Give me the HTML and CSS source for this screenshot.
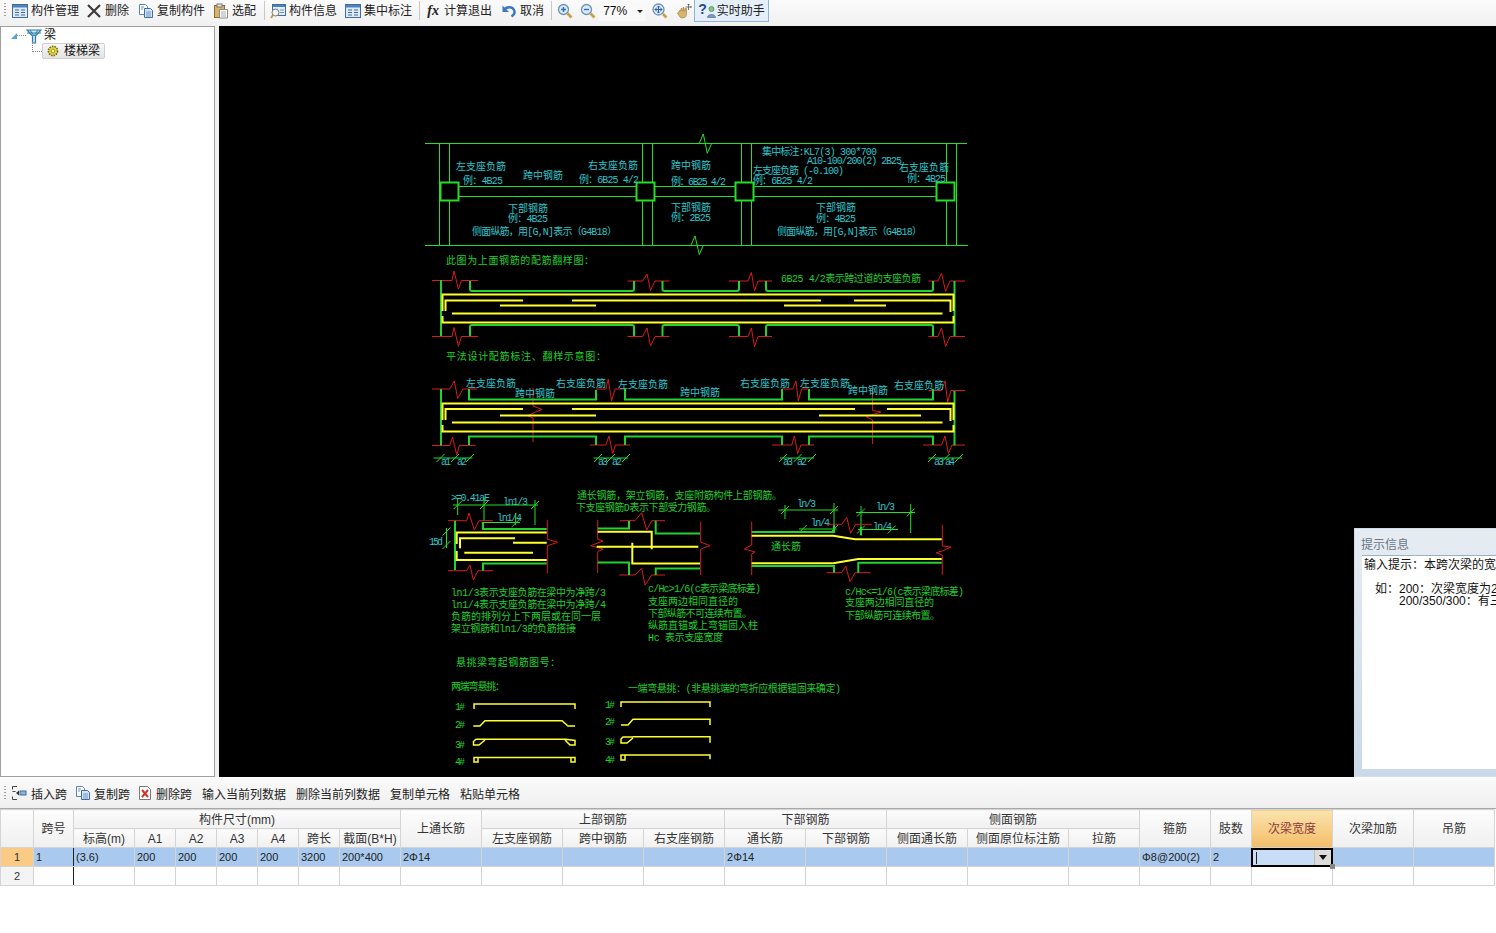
FILE: index.html
```html
<!DOCTYPE html>
<html lang="zh">
<head>
<meta charset="utf-8">
<title>楼梯梁</title>
<link rel="stylesheet" href="styles.css">
</head>
<body>
<div class="app">
  <header class="toolbar">
    <span class="grip"></span>
    <button class="tool"><svg class="ico" viewBox="0 0 16 16"><rect x=".5" y="1.5" width="15" height="13" fill="#dfeaf6" stroke="#3f6da3"/><rect x="1" y="2" width="14" height="2.5" fill="#4f81bd"/><path d="M3 7h4M3 9.5h4M3 12h4M9 7h4M9 9.5h4M9 12h4" stroke="#3f6da3"/></svg>构件管理</button>
    <button class="tool"><svg class="ico" viewBox="0 0 16 16"><path d="M2 2l12 12M14 2L2 14" stroke="#3c3c3c" stroke-width="2.2" fill="none"/></svg>删除</button>
    <button class="tool ml2"><svg class="ico" viewBox="0 0 16 16"><path d="M1.5 1.5h6l2 2v8h-8z" fill="#fff" stroke="#5b85b8"/><path d="M6.5 5.500h6l2 2v7h-8z" fill="#d6e4f5" stroke="#3f6da3"/><path d="M3 4h3M3 6h2M8 9h5M8 11h5M8 13h5" stroke="#6f94c2"/></svg>复制构件</button>
    <button class="tool ml1"><svg class="ico" viewBox="0 0 16 16"><rect x="1.5" y="2.500" width="10" height="12" fill="#d9b36a" stroke="#8a6a2e"/><rect x="4" y="1" width="5" height="3" fill="#e8e8e8" stroke="#777"/><path d="M6.500 6.500h8v8.500h-8z" fill="#fff" stroke="#8a8a8a"/><path d="M8 9h5M8 11h5M8 13h5" stroke="#aaa"/></svg>选配</button>
    <span class="sep sep-a"></span>
    <button class="tool"><svg class="ico" viewBox="0 0 16 16"><rect x="2.500" y="1.500" width="13" height="11" fill="#e3edf8" stroke="#3f6da3"/><rect x="3" y="2" width="12" height="2" fill="#4f81bd"/><path d="M10 7h4M10 9.500h4" stroke="#6f94c2"/><circle cx="5.500" cy="9.500" r="3.500" fill="#f4f4f4" stroke="#777"/><path d="M3 12l-2 3" stroke="#c49a3c" stroke-width="2"/></svg>构件信息</button>
    <button class="tool ml1"><svg class="ico" viewBox="0 0 16 16"><rect x=".5" y="1.500" width="15" height="13" fill="#dfeaf6" stroke="#3f6da3"/><rect x="1" y="2" width="14" height="2.500" fill="#4f81bd"/><path d="M3 7h4M3 9.500h4M3 12h4M9 7h4M9 9.500h4M9 12h4" stroke="#3f6da3"/></svg>集中标注</button>
    <span class="sep sep-b"></span>
    <button class="tool tool-fx"><span class="fx">fx</span>计算退出</button>
    <button class="tool ml2"><svg class="ico" viewBox="0 0 16 16"><path d="M3 7.500C5 3.500 11 3 13 7c1.200 2.500 0 5-2.500 6.500" stroke="#3d78c4" stroke-width="2.400" fill="none"/><path d="M1.500 2.500v6.500h6.500z" fill="#3d78c4"/></svg>取消</button>
    <span class="sep sep-c"></span>
    <button class="tool tool-icon"><svg class="ico" viewBox="0 0 16 16"><circle cx="6.500" cy="6.500" r="5" fill="#dbe9f8" stroke="#6d92b8" stroke-width="1.300"/><path d="M4 6.500h5M6.500 4v5" stroke="#2f6fb5" stroke-width="1.400"/><path d="M10.500 10.500l4 4" stroke="#c9a23f" stroke-width="2.600"/></svg></button>
    <button class="tool tool-icon ml1"><svg class="ico" viewBox="0 0 16 16"><circle cx="6.500" cy="6.500" r="5" fill="#dbe9f8" stroke="#6d92b8" stroke-width="1.300"/><path d="M4 6.500h5" stroke="#2f6fb5" stroke-width="1.400"/><path d="M10.500 10.500l4 4" stroke="#c9a23f" stroke-width="2.600"/></svg></button>
    <span class="zoom-box">77%<i class="drop"></i></span>
    <button class="tool tool-icon ml4"><svg class="ico" viewBox="0 0 16 16"><circle cx="6.500" cy="6.500" r="5.500" fill="#dbe9f8" stroke="#6d92b8" stroke-width="1.300"/><path d="M3 6.500h7M6.500 3v7M3 6.500l1.500-1.500M3 6.500L4.500 8M10 6.500L8.500 5M10 6.500L8.500 8M6.500 3L5 4.500M6.500 3L8 4.500M6.500 10L5 8.500M6.500 10L8 8.500" stroke="#2f5f9e" fill="none"/><path d="M11 11l3.500 3.500" stroke="#c9a23f" stroke-width="2.600"/></svg></button>
    <button class="tool tool-icon ml2"><svg class="ico" viewBox="0 0 16 16"><path d="M2 10l2-3 1 1V5.500h1V8h1V4.500h1V8h1V5.500h1.500V10c0 3-1 5-4 5-2.500 0-3-1.500-5-5z" fill="#d9b46c" stroke="#a5833d" stroke-width=".7"/><path d="M12.500 1v6M9.500 4h6M12.500 1l-1 1M12.500 1l1 1M15.500 4l-1-1M15.500 4l-1 1" stroke="#555" stroke-width=".8" fill="none"/></svg></button>
    <button class="tool tool-on"><span class="qmark">?</span><svg class="ico-small" viewBox="0 0 9 12"><circle cx="4.500" cy="3" r="2.500" fill="#8cc08c" stroke="#4b7d4b" stroke-width=".7"/><path d="M.5 11.500c0-4 8-4 8 0z" fill="#7a9fc0" stroke="#4d6f8f" stroke-width=".7"/></svg>实时助手</button>
  </header>

  <main class="main">
    <aside class="tree">
      <div class="node node-root">
        <svg class="caret" viewBox="0 0 6 6"><path d="M6 0v6H0z" fill="#4aa8d8"/></svg>
        <span class="dots-h"></span>
        <svg class="ico" viewBox="0 0 16 16"><path d="M1 2h14L9.500 8v7h-3V8z" fill="#cfe7f4" stroke="#2d7fa8" stroke-width="1.200"/><path d="M4 2l4 6 4-6M1 5h14" stroke="#2d7fa8" fill="none"/></svg>
        <span class="node-label">梁</span>
      </div>
      <div class="node node-child">
        <span class="dots-l"></span>
        <div class="selected">
          <svg class="ico-gear" viewBox="0 0 12 12"><circle cx="6" cy="6" r="4.600" fill="#e5d43a" stroke="#6f6a14" stroke-dasharray="1.500 1" stroke-width="1.600"/><circle cx="6" cy="6" r="1.800" fill="#fff8a0" stroke="#6f6a14" stroke-width=".6"/></svg>
          <span class="selected-label">楼梯梁</span>
        </div>
      </div>
    </aside>
    <div class="gutter"></div>
    <section class="canvas">
      <svg class="drawing" viewBox="219 26 1277 751" width="1277" height="751">
        <!-- section 1 -->
        <g class="ln-green">
          <path d="M425 143.500H967M425 245.500H968M439.500 143V245M449.500 143V245M642.500 143V245M652.500 143V245M741.500 143V245M751.500 143V245M946.500 143V245M956.500 143V245"/>
          <path d="M459 186.500H936M459 196.500H936"/>
          <path d="M699.300 143.300L703.300 134L707.300 153.300L711.700 143.300M691 245L695 236L699.300 254.700L703.300 245"/>
        </g>
        <g class="ln-green-b">
          <rect x="440.500" y="182.500" width="18" height="18"/><rect x="636.500" y="182.500" width="18" height="18"/><rect x="735.500" y="182.500" width="18" height="18"/><rect x="936.500" y="182.500" width="18" height="18"/>
        </g>
        <g class="cy">
          <text x="456" y="170" textLength="50">左支座负筋</text>
          <text x="463" y="184" textLength="40">例：4B25</text>
          <text x="523" y="179" textLength="40">跨中钢筋</text>
          <text x="588" y="169" textLength="50">右支座负筋</text>
          <text x="579" y="183" textLength="60">例：6B25 4/2</text>
          <text x="508" y="212" textLength="40">下部钢筋</text>
          <text x="508" y="222" textLength="40">例：4B25</text>
          <text x="472" y="235" textLength="145">侧面纵筋，用[G,N]表示（G4B18）</text>
          <text x="671" y="169" textLength="40">跨中钢筋</text>
          <text x="671" y="185" textLength="55">例：6B25 4/2</text>
          <text x="671" y="211" textLength="40">下部钢筋</text>
          <text x="671" y="221" textLength="40">例：2B25</text>
          <text x="762" y="155" textLength="115">集中标注:KL7(3) 300*700</text>
          <text x="807" y="164" textLength="95">A10-100/200(2) 2B25</text>
          <text x="753" y="174" textLength="91">左支座负筋 (-0.100)</text>
          <text x="753" y="184" textLength="60">例：6B25 4/2</text>
          <text x="899" y="171" textLength="50">右支座负筋</text>
          <text x="907" y="182" textLength="39">例：4B25</text>
          <text x="816" y="211" textLength="40">下部钢筋</text>
          <text x="816" y="222" textLength="40">例：4B25</text>
          <text x="777" y="235" textLength="145">侧面纵筋，用[G,N]表示（G4B18）</text>
        </g>

        <!-- section 2 -->
        <g class="gr">
          <text x="446" y="264" textLength="148">此图为上面钢筋的配筋翻样图：</text>
          <text x="781" y="282" textLength="140">6B25 4/2表示跨过道的支座负筋</text>
        </g>
        <g class="ln-red">
          <path d="M432 280.500H452L454 271L458.400 289L461.500 280.500H478"/>
          <path d="M627.500 281H642.600L647 274L650.500 290.600L655 281H669.500"/>
          <path d="M729 281H748L751.400 272.400L754.500 290.600L758 281H772"/>
          <path d="M928.400 281H938L941.500 273.400L945.600 291.300L950 281H965"/>
          <path d="M432 336.500H452L454 327.500L458.400 346.400L461.500 336.500H478"/>
          <path d="M627.500 336.500H642.600L647 328L650.500 346L655 336.500H669.500"/>
          <path d="M729 336.500H748L751.400 328L754.500 346.500L758 336.500H772"/>
          <path d="M928.400 336.500H938L941.500 328L945.600 346.500L950 336.500H965"/>
        </g>
        <g class="ln-rebar">
          <path d="M441 280V336M954.500 281V336"/>
          <path d="M470 281V289Q470 291 472 291H632Q634 291 634 289V281M662.500 281V289Q662.500 291 664.500 291H737Q739 291 739 289V281M766 281V289Q766 291 768 291H931Q933 291 933 289V281"/>
          <path d="M470 336V327Q470 325 472 325H632Q634 325 634 327V336M662.500 336V327Q662.500 325 664.500 325H737Q739 325 739 327V336M766 336V327Q766 325 768 325H931Q933 325 933 327V336"/>
        </g>
        <g class="ln-yellow">
          <path d="M442.500 311V294.500H953.500V311M442.500 316V322.500H953.500V316"/>
          <path d="M445.500 311V300.500H523M572 300.500H821M854 300.500H950.500V312"/>
          <path d="M500 305.500H596M784 305.500H886M452 313.500H942.500"/>
        </g>

        <!-- section 3 -->
        <g class="gr">
          <text x="446" y="360" textLength="160">平法设计配筋标注、翻样示意图：</text>
        </g>
        <g class="ln-red">
          <path d="M432 389H449.800L454.300 381L457.700 398.400L463 389H477"/>
          <path d="M596 389H605.800L608.200 379.400L611.600 400.800L615 389H625"/>
          <path d="M782 389H792.800L795.900 381L798.300 400.800L801.700 389H809"/>
          <path d="M928.400 390.500H941.500L945 381L947.700 402L951 390.500H965"/>
          <path d="M432 445.500H449.800L452.500 437L456.700 455L459.400 445.500H475.600"/>
          <path d="M590 445H605.800L609 436L612.700 453.500L615.400 445H630"/>
          <path d="M772 445H791.700L794.500 436L797.600 453.500L801 445H814"/>
          <path d="M923 445H941.500L945 436L948.400 453.500L952 445H965"/>
          <path d="M533 388V406L542 409.400L527.600 415.600L533 418V442"/>
          <path d="M872.600 388V410.400L881 412L866 416.600L872.600 420V444"/>
        </g>
        <g class="ln-rebar">
          <path d="M441 389V445.500M954.500 391V445.500"/>
          <path d="M469 389V399.500H596V390M625 389V399.500H782V389M809 389V399.500H933V389"/>
          <path d="M469 445V436.500H596V445M625 445V436.500H782V445M809 445V436.500H933V445"/>
        </g>
        <g class="ln-yellow">
          <path d="M442.500 420V403.500H953.500V420M442.500 425V431.500H953.500V425"/>
          <path d="M445.500 420V409H523M572 409H855M887 409H950.500V421"/>
          <path d="M500 415.500H596M819 415.500H921M452 422.500H942.500"/>
        </g>
        <g class="ln-green">
          <path d="M433.600 458H472.500M436.500 462l8-8M451 462l8-8M466 462l8-8"/>
          <path d="M593.700 458H628M594 462l8-8M607 462l8-8M622 462l8-8"/>
          <path d="M780 458H814M779 462l8-8M793.600 462l8-8M808 462l8-8"/>
          <path d="M928.400 458H962M928 462l8-8M941.600 462l8-8M955 462l8-8"/>
        </g>
        <g class="cy">
          <text x="466" y="387" textLength="50">左支座负筋</text>
          <text x="556" y="387" textLength="50">右支座负筋</text>
          <text x="618" y="388" textLength="50">左支座负筋</text>
          <text x="680" y="396" textLength="40">跨中钢筋</text>
          <text x="740" y="387" textLength="50">右支座负筋</text>
          <text x="800" y="387" textLength="50">左支座负筋</text>
          <text x="848" y="394" textLength="40">跨中钢筋</text>
          <text x="894" y="389" textLength="50">右支座负筋</text>
          <text x="515" y="397" textLength="40">跨中钢筋</text>
          <text x="441" y="465" textLength="10">a1</text><text x="457" y="465" textLength="10">a2</text>
          <text x="598" y="465" textLength="10">a3</text><text x="612" y="465" textLength="10">a2</text>
          <text x="783" y="465" textLength="10">a3</text><text x="797" y="465" textLength="10">a2</text>
          <text x="934" y="465" textLength="10">a3</text><text x="945" y="465" textLength="10">a4</text>
        </g>

        <!-- section 4 -->
        <g class="cy">
          <text x="451" y="501" textLength="39">&gt;=0.41aE</text>
          <text x="503" y="505" textLength="25">ln1/3</text>
          <text x="497" y="521" textLength="25">ln1/4</text>
          <text x="429" y="545" textLength="14">15d</text>
          <text x="797" y="507" textLength="19">ln/3</text>
          <text x="811" y="526" textLength="19">ln/4</text>
          <text x="876" y="510" textLength="19">ln/3</text>
          <text x="873" y="530" textLength="19">ln/4</text>
        </g>
        <g class="ln-green">
          <path d="M453 505H538M453.700 509l8-8M480 509l8-8M531 509l8-8M457.700 498V515M484 498V521M535 500V525"/>
          <path d="M481.700 522.500H520M511.700 527l8-8M515.700 513V525"/>
          <path d="M446.500 528V548M442.500 535.500l8-8M442.500 549l8-8"/>
          <path d="M778.300 510H838M781 514l8-8M830 514l8-8M785 505V519M834 503V531.700"/>
          <path d="M799 529H836.700M798.700 533l8-8M830 533l8-8"/>
          <path d="M856 512.500H915M857 516.500l8-8M906.700 516.500l8-8M861 506V533M910.700 504V533"/>
          <path d="M858 529.500H898M857 533.500l8-8M887.700 533.500l8-8"/>
        </g>
        <g class="ln-red">
          <path d="M448 520.700H466.700L469 513L474.300 530L479 520.700H493"/>
          <path d="M448 570.700H466.700L470 565L473.300 580L478 570.700H493"/>
          <path d="M547.300 520V539.300L557.700 542.300L547.300 545.700V573.300"/>
          <path d="M597.700 520V539.300L603 541L590.700 545.700L603 549L597.700 551.700V573"/>
          <path d="M700.700 521.700V542L710 545.700L700.700 549V575"/>
          <path d="M620 520.700H635L641.700 512.700L646.700 530L651.700 520.700H665"/>
          <path d="M619.300 575H635L641.700 568.300L645 585L651.700 575H665"/>
          <path d="M751.700 521.700V545L744.300 549L755 552L751.700 554V575"/>
          <path d="M942.300 525V546L951 547L942.300 551L936 552.700L942.300 555V575"/>
          <path d="M826.700 524.300H841.700L846.700 517.300L850.700 533.300L855.700 524.300H871.700"/>
          <path d="M826.700 572.700H841.700L845.700 566L850 581.700L855 572.700H870.700"/>
        </g>
        <g class="ln-rebar">
          <path d="M455 520.700V570"/>
          <path d="M483 522V529H546.700M483 570.700V563.500H546.700"/>
          <path d="M597.700 528.500H629V520.700M655.700 520.700V533.500H700M597.700 562.500H629V575M655.700 575V568.500H700"/>
          <path d="M751.700 532H834V525M861 526.700V535.500M751.700 566H834V572.700M858.300 572.700V562.700H941.700"/>
        </g>
        <g class="ln-yellow">
          <path d="M456.700 544V532.500H546.700M456.700 551V560H546.700M460 548.300V538.300H515M513 542.700H546.700M464.300 552.700H533"/>
          <path d="M597.700 531.700H651.700V549.300M596.700 546.700H698.300M632.300 542.700V563.500H700"/>
          <path d="M751.700 535.700H833.300L855 539.300H941.700"/>
          <path d="M751.700 563.300H833.300L858.300 559H941.700"/>
        </g>
        <g class="gr">
          <text x="577" y="499" textLength="205">通长钢筋，架立钢筋，支座附筋构件上部钢筋。</text>
          <text x="576" y="511" textLength="140">下支座钢筋D表示下部受力钢筋。</text>
          <text x="771" y="550" textLength="30">通长筋</text>
          <text x="451" y="596" textLength="155">ln1/3表示支座负筋在梁中为净跨/3</text>
          <text x="451" y="608" textLength="155">ln1/4表示支座负筋在梁中为净跨/4</text>
          <text x="451" y="620" textLength="150">负筋的排列分上下两层或在同一层</text>
          <text x="451" y="632" textLength="125">架立钢筋和ln1/3的负筋搭接</text>
          <text x="648" y="592" textLength="113">c/Hc&gt;1/6(c表示梁底标差)</text>
          <text x="648" y="605" textLength="90">支座两边相同直径的</text>
          <text x="648" y="617" textLength="104">下部纵筋不可连续布置。</text>
          <text x="648" y="629" textLength="110">纵筋直锚或上弯锚固入柱</text>
          <text x="648" y="641" textLength="75">Hc 表示支座宽度</text>
          <text x="845" y="595" textLength="119">c/Hc&lt;=1/6(c表示梁底标差)</text>
          <text x="845" y="606" textLength="89">支座两边相同直径的</text>
          <text x="845" y="619" textLength="95">下部纵筋可连续布置。</text>
        </g>

        <!-- section 5 -->
        <g class="gr">
          <text x="456" y="666" textLength="104">悬挑梁弯起钢筋图号：</text>
          <text x="451" y="690" textLength="54">两端弯悬挑：</text>
          <text x="628" y="692" textLength="213">一端弯悬挑：(非悬挑端的弯折应根据锚固来确定)</text>
          <text x="455" y="710" textLength="10">1#</text>
          <text x="455" y="728" textLength="10">2#</text>
          <text x="455" y="748" textLength="10">3#</text>
          <text x="455" y="765" textLength="10">4#</text>
          <text x="605" y="708" textLength="10">1#</text>
          <text x="605" y="725" textLength="10">2#</text>
          <text x="605" y="745" textLength="10">3#</text>
          <text x="605" y="763" textLength="10">4#</text>
        </g>
        <g class="ln-yellow ln-thin">
          <path d="M474 709V704H575V709"/>
          <path d="M473.300 726H480L485 720.700H562L568 726H575"/>
          <path d="M485 739.300H566L575 740.500V745H570L565 740M485 739.300H476L473.500 741.500V745H479L485 740"/>
          <path d="M478 757.500H572M474 757.500H478V762H474ZM571 757.500H575V762H571Z"/>
          <path d="M621 707V702H710V707"/>
          <path d="M621 725H628L633 719.300H710V725"/>
          <path d="M633 736.700H710V742.700M633 737H623L621 739V743H627L633 738"/>
          <path d="M625 755H710V759.300M625 755H621V760H625Z"/>
        </g>
      </svg>

      <div class="hint">
        <div class="hint-title">提示信息</div>
        <div class="hint-body">
          <p>输入提示：本跨次梁的宽度</p>
          <p class="hint-eg">如：200：次梁宽度为200</p>
          <p class="hint-eg2">200/350/300：有三根</p>
        </div>
      </div>
    </section>
  </main>

  <div class="toolbar-b">
    <span class="grip"></span>
    <button class="tool-b tool-b1"><svg class="ico" viewBox="0 0 16 16"><path d="M6 1.500H1.500v3M1.500 11.500v3H6" stroke="#444" fill="none"/><path d="M1.500 6.500h3" stroke="#444"/><path d="M5 8l3-2.500v5z" fill="#333"/><rect x="9" y="6" width="6" height="4" fill="#8fb4de" stroke="#3f6da3"/></svg>插入跨</button>
    <button class="tool-b tool-b2"><svg class="ico" viewBox="0 0 16 16"><path d="M1.500 1.500h6l2 2v8h-8z" fill="#fff" stroke="#5b85b8"/><path d="M6.500 5.500h6l2 2v7h-8z" fill="#d6e4f5" stroke="#3f6da3"/><path d="M3 4h3M3 6h2M8 9h5M8 11h5M8 13h5" stroke="#6f94c2"/></svg>复制跨</button>
    <button class="tool-b"><svg class="ico" viewBox="0 0 16 16"><path d="M2.500 1.500h8l3 3v10h-11z" fill="#fff" stroke="#777"/><path d="M5 5l6 7M11 5l-6 7" stroke="#d0342c" stroke-width="2"/></svg>删除跨</button>
    <button class="tool-t">输入当前列数据</button>
    <button class="tool-t">删除当前列数据</button>
    <button class="tool-t">复制单元格</button>
    <button class="tool-t">粘贴单元格</button>
  </div>

  <div class="grid-wrap">
    <table class="grid">
      <colgroup>
        <col class="w33"><col class="w40"><col class="w61"><col class="w41"><col class="w41"><col class="w41"><col class="w41"><col class="w41"><col class="w61"><col class="w81"><col class="w81"><col class="w81"><col class="w81"><col class="w81"><col class="w81"><col class="w81"><col class="w101"><col class="w71"><col class="w71"><col class="w41"><col class="w81"><col class="w81"><col class="w81">
      </colgroup>
      <thead>
        <tr>
          <th rowspan="2"></th><th rowspan="2">跨号</th><th colspan="7">构件尺寸(mm)</th><th rowspan="2">上通长筋</th><th colspan="3">上部钢筋</th><th colspan="2">下部钢筋</th><th colspan="3">侧面钢筋</th><th rowspan="2">箍筋</th><th rowspan="2">肢数</th><th rowspan="2" class="active-head">次梁宽度</th><th rowspan="2">次梁加筋</th><th rowspan="2">吊筋</th>
        </tr>
        <tr>
          <th>标高(m)</th><th>A1</th><th>A2</th><th>A3</th><th>A4</th><th>跨长</th><th>截面(B*H)</th><th>左支座钢筋</th><th>跨中钢筋</th><th>右支座钢筋</th><th>通长筋</th><th>下部钢筋</th><th>侧面通长筋</th><th>侧面原位标注筋</th><th>拉筋</th>
        </tr>
      </thead>
      <tbody>
        <tr class="row-on">
          <th class="rh rh-on">1</th><td class="frozen-r">1</td><td>(3.6)</td><td>200</td><td>200</td><td>200</td><td>200</td><td>3200</td><td>200*400</td><td>2Φ14</td><td></td><td></td><td></td><td>2Φ14</td><td></td><td></td><td></td><td></td><td>Φ8@200(2)</td><td>2</td>
          <td class="editing"><div class="editor"><i class="cursor"></i><span class="combo"></span></div><i class="handle"></i></td><td></td><td></td>
        </tr>
        <tr>
          <th class="rh">2</th><td class="frozen-r"></td><td></td><td></td><td></td><td></td><td></td><td></td><td></td><td></td><td></td><td></td><td></td><td></td><td></td><td></td><td></td><td></td><td></td><td></td><td></td><td></td><td></td>
        </tr>
      </tbody>
    </table>
  </div>
</div>
</body>
</html>
```

FILE: styles.css
```css
* { box-sizing: border-box; }
html, body { margin: 0; padding: 0; height: 100%; overflow: hidden; }
body { background: #fff; font-family: "Liberation Sans", "Noto Sans CJK SC", sans-serif; font-size: 12px; color: #111; }
.app { width: 1496px; height: 933px; display: flex; flex-direction: column; overflow: hidden; }

/* top toolbar */
.toolbar { height: 26px; flex: none; display: flex; align-items: center; padding: 0 0 5px 9px; position: relative; background: linear-gradient(#fbfbfb, #f0f0f0); }
.toolbar .grip { position: absolute; left: 4px; top: 3px; }
.grip { width: 2px; height: 15px; background-image: linear-gradient(#a0a0a0 50%, transparent 50%); background-size: 2px 3px; }
.tool { display: flex; align-items: center; gap: 3px; padding: 0 4px 0 3px; border: 0; background: none; font: inherit; line-height: 16px; color: #222; height: 20px; white-space: nowrap; }
.ml1 { margin-left: 1px; }
.ml2 { margin-left: 2px; }
.ml4 { margin-left: 4px; }
.ico { width: 16px; height: 16px; flex: none; display: block; }
.sep { width: 1px; height: 19px; background: #c8c8c8; flex: none; }
.sep-a { margin: 0 2px 0 4px; }
.sep-b { margin: 0 1px 0 3px; }
.sep-c { margin: 0 2px 0 3px; }
.tool-fx { padding-left: 5px; gap: 4px; }
.fx { width: 14px; font-family: "Liberation Serif", serif; font-style: italic; font-weight: bold; font-size: 14px; line-height: 16px; color: #222; }
.tool-icon { padding: 0 3px; }
.zoom-box { width: 46px; display: flex; align-items: center; padding-left: 4px; font-size: 12px; height: 20px; background: #f9f9f9; position: relative; }
.drop { position: absolute; right: 2px; top: 9px; border: 3px solid transparent; border-top: 3px solid #222; }
.tool-on { height: 22px; margin-left: -1px; padding: 2px 3px 0; gap: 0; background: #e4eff9; border: 1px solid #8fb3da; border-top: 0; }
.qmark { font-weight: bold; font-size: 14px; color: #1c4d92; line-height: 16px; margin-top: -4px; }
.ico-small { width: 9px; height: 12px; margin: 2px 1px 0 0; flex: none; }

/* main area */
.main { height: 751px; flex: none; display: flex; background: #f0f0f0; }
.tree { width: 215px; flex: none; background: #fff; border: 1px solid #a0a0a0; padding-top: 1px; }
.gutter { width: 4px; flex: none; background: #f0f0f0; }
.canvas { flex: 1; background: #000; position: relative; overflow: hidden; }
.drawing { display: block; }

.node { display: flex; align-items: center; position: relative; }
.node-root { padding-left: 10px; height: 15px; }
.caret { width: 6px; height: 6px; flex: none; }
.dots-h { width: 9px; border-top: 1px dotted #888; flex: none; }
.node-root .ico { margin-right: 2px; }
.node-label { font-size: 12px; line-height: 14px; margin-top: -2px; }
.node-child { padding-left: 31px; height: 16px; }
.dots-l { width: 10px; height: 10px; margin-top: -8px; border-left: 1px dotted #888; border-bottom: 1px dotted #888; flex: none; }
.selected { height: 16px; width: 63px; display: flex; align-items: center; gap: 5px; padding-left: 4px; background: linear-gradient(#f7f7f7, #e3e3e3); border: 1px solid #cfcfcf; border-radius: 2px; }
.selected-label { line-height: 14px; margin-top: -1px; }
.ico-gear { width: 12px; height: 12px; flex: none; }

/* hint window */
.hint { position: absolute; left: 1135px; top: 502px; width: 200px; height: 249px; background: linear-gradient(#e6ecf2, #c9d9e9); border: 1px solid #cfdce9; padding: 7px 0 0 6px; }
.hint-title { color: #6b7885; font-size: 12px; line-height: 18px; height: 19px; }
.hint-body { background: #fff; height: 214px; margin-left: 1px; padding: 3px 0 0 2px; border-top: 1px solid #9fb0c0; line-height: 12px; color: #111; white-space: nowrap; font-size: 12px; }
.hint-body p { margin: 0; }
.hint-body .hint-eg { padding-left: 11px; margin-top: 12px; }
.hint-eg2 { padding-left: 35px; }

/* bottom toolbar */
.toolbar-b { height: 31px; flex: none; margin-top: 1px; display: flex; align-items: center; position: relative; padding-left: 11px; background: linear-gradient(#fafafa, #efefef); border-bottom: 1px solid #a8a8a8; }
.toolbar-b .grip { position: absolute; left: 4px; top: 8px; }
.tool-b { display: flex; align-items: center; gap: 3px; padding: 0; margin-right: 8px; border: 0; background: none; font: inherit; color: #222; white-space: nowrap; }
.tool-b1 { gap: 4px; }
.tool-b2 { margin-right: 7px; }
.tool-t { padding: 0; margin-right: 10px; border: 0; background: none; font: inherit; color: #222; white-space: nowrap; }
.tool-b + .tool-t { margin-left: 2px; }

/* grid */
.grid-wrap { flex: 1; background: #fff; }
.grid { table-layout: fixed; width: 1494px; border-collapse: collapse; font-size: 12px; }
.w33 { width: 33px; } .w40 { width: 40px; } .w41 { width: 41px; } .w61 { width: 61px; }
.w71 { width: 71px; } .w81 { width: 81px; } .w101 { width: 101px; }
.grid th, .grid td { border: 1px solid #d4d4d4; padding: 0; overflow: hidden; white-space: nowrap; }
.grid thead tr { height: 19px; }
.grid thead th { background: linear-gradient(#fcfcfc, #f0f0f0); font-weight: normal; color: #333; text-align: center; line-height: 13px; padding-top: 2px; }
.grid tbody tr { height: 19px; }
.grid td { padding-left: 2px; font-size: 11px; line-height: 13px; color: #222; }
.grid .rh { background: #f4f4f4; font-weight: normal; font-size: 11px; line-height: 13px; text-align: center; color: #333; }
.grid .rh-on { background: #f9cb84; }
.row-on td { background: #a9caee; }
.grid .frozen-r { border-right: 1px solid #222; }
.grid thead .active-head { background: linear-gradient(#fbe3ae, #f3bd68); color: #8c3a3a; }
.grid .editing { padding: 0; position: relative; overflow: visible; background: #a9caee; }
.editor { height: 19px; border: 2px solid #000; background: #c8def6; position: relative; margin: -1px; }
.cursor { position: absolute; left: 3px; top: 2px; width: 1px; height: 12px; background: #222; }
.combo { position: absolute; right: 0; top: 0; width: 17px; height: 15px; background: #dcdcdc; border-left: 1px solid #bbb; }
.combo::after { content: ""; position: absolute; left: 4px; top: 5px; border: 4px solid transparent; border-top: 5px solid #111; }
.handle { position: absolute; right: -3px; bottom: -3px; width: 5px; height: 5px; background: #888; }

/* CAD drawing */
.drawing text { font-family: "Liberation Mono", "Noto Sans CJK SC", monospace; font-size: 10px; }
.cy text { fill: #2cc6cc; }
.gr text { fill: #1fd02a; }
.ln-green path { fill: none; stroke: #24e024; stroke-width: 1; }
.ln-green-b rect { fill: #000; stroke: #24e024; stroke-width: 2; }
.ln-rebar path { fill: none; stroke: #22d22e; stroke-width: 2; }
.ln-yellow path { fill: none; stroke: #ffff2e; stroke-width: 2; }
.ln-thin path { stroke-width: 1.500; }
.ln-red path { fill: none; stroke: #d81c1c; stroke-width: 1; }
```
